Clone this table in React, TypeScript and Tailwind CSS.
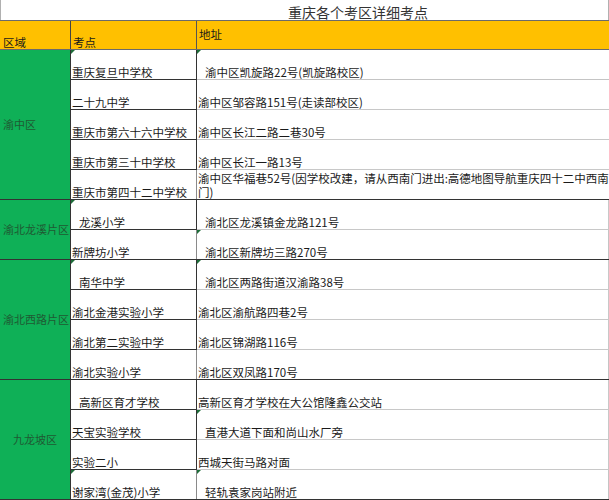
import React from 'react';

type Row = { school: string; addr: string; addr2?: string; sIndent?: boolean; aIndent?: boolean; sTri?: boolean; aTri?: boolean };
type Group = { name: string; center?: boolean; rows: Row[] };

const groups: Group[] = [
  {
    name: '渝中区',
    rows: [
      { school: '重庆复旦中学校', addr: '渝中区凯旋路22号(凯旋路校区)', aIndent: true, sTri: true, aTri: true },
      { school: '二十九中学', addr: '渝中区邹容路151号(走读部校区)' },
      { school: '重庆市第六十六中学校', addr: '渝中区长江二路二巷30号' },
      { school: '重庆市第三十中学校', addr: '渝中区长江一路13号' },
      {
        school: '重庆市第四十二中学校',
        addr: '渝中区华福巷52号(因学校改建，请从西南门进出:高德地图导航重庆四十二中西南',
        addr2: '门)',
      },
    ],
  },
  {
    name: '渝北龙溪片区',
    rows: [
      { school: '龙溪小学', addr: '渝北区龙溪镇金龙路121号', sIndent: true, aIndent: true, sTri: true },
      { school: '新牌坊小学', addr: '渝北区新牌坊三路270号', aIndent: true, aTri: true },
    ],
  },
  {
    name: '渝北西路片区',
    rows: [
      { school: '南华中学', addr: '渝北区两路街道汉渝路38号', sIndent: true, aIndent: true, sTri: true, aTri: true },
      { school: '渝北金港实验小学', addr: '渝北区渝航路四巷2号' },
      { school: '渝北第二实验中学', addr: '渝北区锦湖路116号' },
      { school: '渝北实验小学', addr: '渝北区双凤路170号' },
    ],
  },
  {
    name: '九龙坡区',
    center: true,
    rows: [
      { school: '高新区育才学校', addr: '高新区育才学校在大公馆隆鑫公交站', sIndent: true },
      { school: '天宝实验学校', addr: '直港大道下面和尚山水厂旁', aIndent: true, aTri: true },
      { school: '实验二小', addr: '西城天街马路对面' },
      { school: '谢家湾(金茂)小学', addr: '轻轨袁家岗站附近', aIndent: true, sTri: true, aTri: true },
    ],
  },
];

function Tri() {
  return (
    <span className="absolute left-0 top-0 h-0 w-0 border-t-[4px] border-r-[4px] border-t-[#1e6e3a] border-r-transparent" />
  );
}

export default function App() {
  let idx = 0;
  return (
    <div
      className="w-[609px] h-[500px] overflow-hidden bg-white text-[#1a1a1a]"
      style={{ fontFamily: '"Noto Sans CJK SC", "Noto Sans", sans-serif' }}
    >
      {/* title */}
      <div className="flex h-[20px] items-end border-l border-r border-[#b0b0b0] pl-[287px] text-[14px] leading-[16px] text-[#333]">
        重庆各个考区详细考点
      </div>

      {/* header */}
      <div className="flex h-[30px] border-t border-b border-[#6b6b6b] bg-[#ffc000] text-[11.5px] leading-[13.5px]">
        <div className="flex w-[71px] items-end border-r border-[#444] pl-[3px]">区域</div>
        <div className="flex w-[126px] items-end border-r border-[#555] pl-[2px]">考点</div>
        <div className="flex flex-1 items-end pb-[8px] pl-[2px]">地址</div>
      </div>

      {groups.map((g) => (
        <div key={g.name} className="flex border-b border-[#333]">
          <div
            className={
              'flex w-[71px] shrink-0 items-center whitespace-nowrap border-r border-[#333] bg-[#0fb057] text-[11px] leading-[13px] text-[#1f5a33] ' +
              (g.center ? 'justify-center' : 'pl-[3px]')
            }
          >
            {g.name}
          </div>
          <div className="flex flex-1 flex-col">
            {g.rows.map((r, i) => {
              const first = idx === 0;
              idx++;
              const lastInGroup = i === g.rows.length - 1;
              return (
                <div
                  key={r.school}
                  className={'flex text-[11.5px] leading-[13.5px] ' + (lastInGroup ? 'h-[29px]' : 'h-[30px]')}
                >
                  <div
                    className={
                      'relative flex w-[126px] shrink-0 items-end whitespace-nowrap border-r border-[#8a8a8a] ' +
                      (lastInGroup ? '' : 'border-b border-[#333] ') +
                      (r.sIndent ? 'pl-[8px]' : 'pl-[1px]')
                    }
                  >
                    {r.sTri && <Tri />}
                    {r.school}
                  </div>
                  <div
                    className={
                      'relative flex flex-1 items-end overflow-hidden whitespace-nowrap border-r border-[#c4c4c4] ' +
                      (first ? 'border-b border-[#333] ' : lastInGroup ? '' : 'border-b border-[#c8c8c8] ') +
                      (r.aIndent ? 'pl-[8px]' : 'pl-[1px]')
                    }
                  >
                    {r.aTri && <Tri />}
                    {r.addr2 ? (
                      <div className="flex flex-col">
                        <span>{r.addr}</span>
                        <span>{r.addr2}</span>
                      </div>
                    ) : (
                      r.addr
                    )}
                  </div>
                </div>
              );
            })}
          </div>
        </div>
      ))}
    </div>
  );
}
